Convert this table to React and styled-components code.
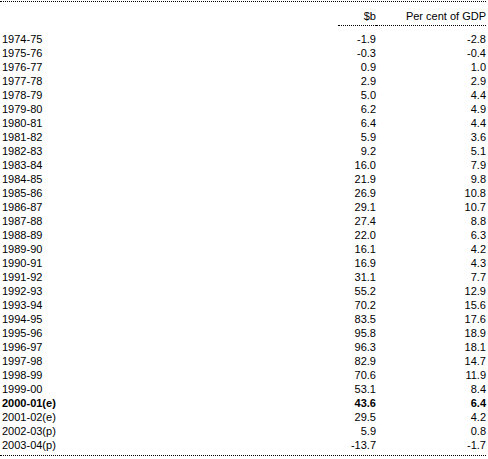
import React from "react";
import styled, { createGlobalStyle } from "styled-components";

const Global = createGlobalStyle`
  html, body { margin: 0; padding: 0; background: #fff; }
  body { font-family: "Liberation Sans", Arial, sans-serif; font-size: 11px; color: #000; }
`;

const Table = styled.div`
  width: 486px;
  margin-top: 1px;
  border-top: 1px dotted #000;
  border-bottom: 1px dotted #000;
  padding-bottom: 3px;
`;

const Grid = styled.div`
  display: grid;
  grid-template-columns: 1fr 38px 110px;
  line-height: 14px;
`;

const HeadCell = styled.div`
  padding-top: 7px;
  padding-bottom: 2px;
  text-align: right;
  border-bottom: ${(p) => (p.$blank ? "none" : "1px dotted #000")};
  margin-bottom: 6px;
`;

const Cell = styled.div`
  text-align: ${(p) => (p.$left ? "left" : "right")};
  padding-left: ${(p) => (p.$left ? "2px" : "0")};
  font-weight: ${(p) => (p.$bold ? "bold" : "normal")};
  white-space: nowrap;
`;

const rows = [
  ["1974-75", "-1.9", "-2.8"],
  ["1975-76", "-0.3", "-0.4"],
  ["1976-77", "0.9", "1.0"],
  ["1977-78", "2.9", "2.9"],
  ["1978-79", "5.0", "4.4"],
  ["1979-80", "6.2", "4.9"],
  ["1980-81", "6.4", "4.4"],
  ["1981-82", "5.9", "3.6"],
  ["1982-83", "9.2", "5.1"],
  ["1983-84", "16.0", "7.9"],
  ["1984-85", "21.9", "9.8"],
  ["1985-86", "26.9", "10.8"],
  ["1986-87", "29.1", "10.7"],
  ["1987-88", "27.4", "8.8"],
  ["1988-89", "22.0", "6.3"],
  ["1989-90", "16.1", "4.2"],
  ["1990-91", "16.9", "4.3"],
  ["1991-92", "31.1", "7.7"],
  ["1992-93", "55.2", "12.9"],
  ["1993-94", "70.2", "15.6"],
  ["1994-95", "83.5", "17.6"],
  ["1995-96", "95.8", "18.9"],
  ["1996-97", "96.3", "18.1"],
  ["1997-98", "82.9", "14.7"],
  ["1998-99", "70.6", "11.9"],
  ["1999-00", "53.1", "8.4"],
  ["2000-01(e)", "43.6", "6.4", true],
  ["2001-02(e)", "29.5", "4.2"],
  ["2002-03(p)", "5.9", "0.8"],
  ["2003-04(p)", "-13.7", "-1.7"],
];

export default function App() {
  return (
    <>
      <Global />
      <Table>
        <Grid>
          <HeadCell $blank />
          <HeadCell>$b</HeadCell>
          <HeadCell>Per cent of GDP</HeadCell>
          {rows.map(([y, b, p, bold]) => (
            <React.Fragment key={y}>
              <Cell $left $bold={bold}>{y}</Cell>
              <Cell $bold={bold}>{b}</Cell>
              <Cell $bold={bold}>{p}</Cell>
            </React.Fragment>
          ))}
        </Grid>
      </Table>
    </>
  );
}
